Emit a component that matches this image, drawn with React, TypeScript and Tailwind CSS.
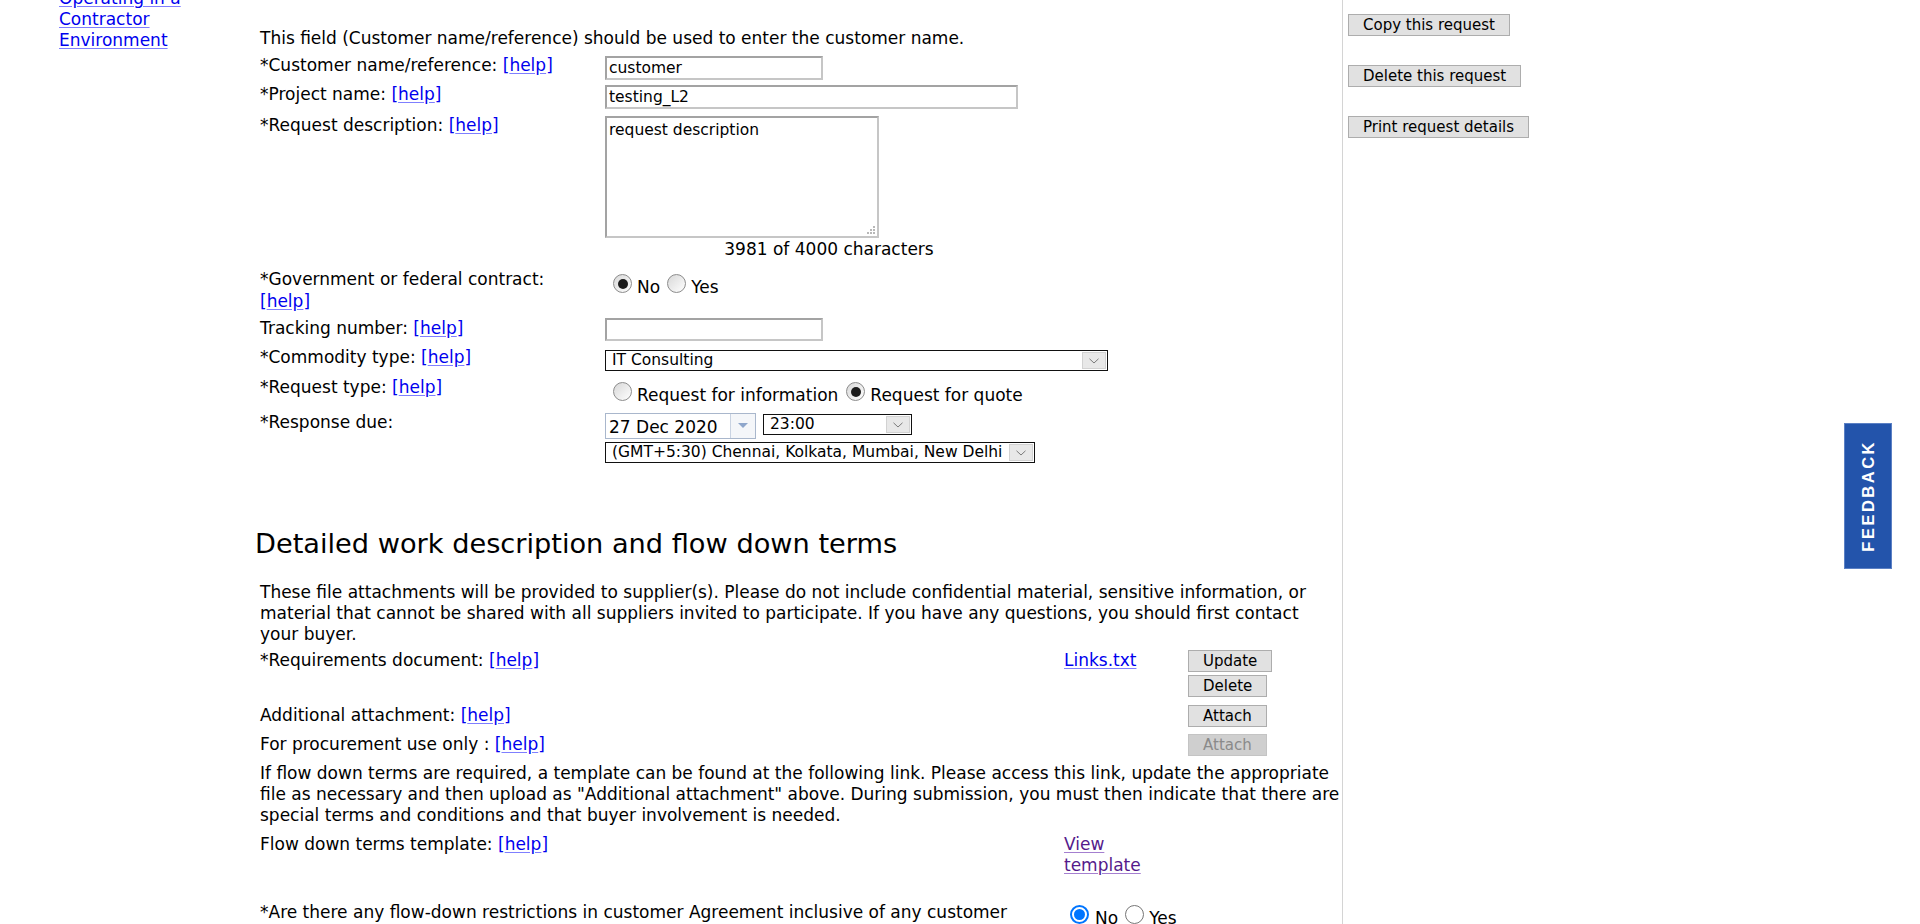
import React from "react";

const Help = () => (
  <span className="text-[#0000ee]">
    [<span className="underline decoration-[#7f7fff] underline-offset-[2px]">help</span>]
  </span>
);

function Radio({ checked, blue }: { checked?: boolean; blue?: boolean }) {
  if (blue) {
    return checked ? (
      <span className="inline-flex h-[19px] w-[19px] shrink-0 items-center justify-center rounded-full border-2 border-[#0075ff] bg-white">
        <span className="h-[11px] w-[11px] rounded-full bg-[#0075ff]" />
      </span>
    ) : (
      <span className="inline-flex h-[19px] w-[19px] shrink-0 rounded-full border border-[#767676] bg-white" />
    );
  }
  return (
    <span className="inline-flex h-[19px] w-[19px] shrink-0 items-center justify-center rounded-full border border-[#8c8c8c] bg-gradient-to-br from-[#d8d8d8] to-white">
      {checked && <span className="h-[10px] w-[10px] rounded-full bg-[#1c1c1c]" />}
    </span>
  );
}

const Chevron = () => (
  <svg width="10" height="6" viewBox="0 0 10 6" fill="none">
    <path d="M0.5 0.8 L5 5 L9.5 0.8" stroke="#7a7a7a" strokeWidth="1" />
  </svg>
);

function Select({ w, text }: { w: string; text: string }) {
  return (
    <div className={`flex h-[21px] items-stretch border border-[#111111] bg-white ${w}`}>
      <div className="flex-1 overflow-hidden whitespace-nowrap pl-[6px] text-[15.5px] leading-[19px]">{text}</div>
      <div className="my-[1px] mr-[1px] flex w-[24px] items-center justify-center border border-[#d2d2d2] bg-[#e8e8e8]">
        <Chevron />
      </div>
    </div>
  );
}

function Btn({ children, disabled }: { children: React.ReactNode; disabled?: boolean }) {
  return disabled ? (
    <div className="h-[22px] border border-[#c4c4c4] bg-[#cfcfcf] px-[14px] text-[15px] leading-[20px] text-[#8a8a8a]">
      {children}
    </div>
  ) : (
    <div className="h-[22px] border border-[#adadad] bg-[#e1e1e1] px-[14px] text-[15px] leading-[20px] text-black">
      {children}
    </div>
  );
}

const TextBox = ({ w, value, h }: { w: string; value?: string; h: string }) => (
  <div
    className={`${w} ${h} border-2 border-t-[#a3a3a3] border-l-[#a3a3a3] border-r-[#c6c6c6] border-b-[#c6c6c6] bg-white pl-[2px] text-[15.5px] leading-[20px]`}
  >
    {value}
  </div>
);

export default function App() {
  return (
    <div className="relative flex h-[924px] w-[1920px] overflow-hidden bg-white font-['DejaVu_Sans',sans-serif] text-[17px] leading-[21px] text-black">
      {/* Left nav */}
      <div className="w-[255px] shrink-0 pl-[59px]">
        <div className="-mt-[12px] w-[150px]">
          <a className="text-[#0000ee] underline decoration-[#7f7fff] underline-offset-[2px]">
            Operating in a Contractor Environment
          </a>
        </div>
      </div>

      {/* Main */}
      <div className="w-[1087px] shrink-0">
        <div className="pl-[5px]">
          <p className="mt-[28px]">This field (Customer name/reference) should be used to enter the customer name.</p>

          <div className="mt-[6px] flex">
            <div className="w-[345px]">
              *Customer name/reference: <Help />
            </div>
            <div className="mt-[1px]">
              <TextBox w="w-[218px]" h="h-[24px]" value="customer" />
            </div>
          </div>

          <div className="mt-[4px] flex">
            <div className="w-[345px]">
              *Project name: <Help />
            </div>
            <div className="mt-[1px]">
              <TextBox w="w-[413px]" h="h-[24px]" value="testing_L2" />
            </div>
          </div>

          <div className="mt-[6px] flex">
            <div className="w-[345px]">
              *Request description: <Help />
            </div>
            <div className="mt-[1px]">
              <div className="relative h-[122px] w-[274px] border-2 border-t-[#a3a3a3] border-l-[#a3a3a3] border-r-[#c6c6c6] border-b-[#c6c6c6] bg-white pl-[2px] pt-[3px] text-[15.5px] leading-[19px]">
                request description
                <svg className="absolute bottom-[2px] right-[2px]" width="10" height="10" viewBox="0 0 10 10">
                  <rect x="8" y="2" width="2" height="2" fill="#b8b8b8" />
                  <rect x="5" y="5" width="2" height="2" fill="#b8b8b8" />
                  <rect x="8" y="5" width="2" height="2" fill="#b8b8b8" />
                  <rect x="2" y="8" width="2" height="2" fill="#b8b8b8" />
                  <rect x="5" y="8" width="2" height="2" fill="#b8b8b8" />
                  <rect x="8" y="8" width="2" height="2" fill="#b8b8b8" />
                </svg>
              </div>
            </div>
          </div>

          <div className="mt-[1px] flex">
            <div className="w-[345px]" />
            <div className="w-[448px] text-center">3981 of 4000 characters</div>
          </div>

          <div className="mt-[9px] flex">
            <div className="w-[345px] leading-[21.5px]">
              *Government or federal contract:
              <br />
              <Help />
            </div>
            <div className="flex items-start pl-[8px]">
              <span className="mt-[5px] flex">
                <Radio checked />
              </span>
              <span className="ml-[5px] mt-[8px]">No</span>
              <span className="ml-[7px] mt-[5px] flex">
                <Radio />
              </span>
              <span className="ml-[5px] mt-[8px]">Yes</span>
            </div>
          </div>

          <div className="mt-[6px] flex">
            <div className="w-[345px]">
              Tracking number: <Help />
            </div>
            <div>
              <TextBox w="w-[218px]" h="h-[23px]" />
            </div>
          </div>

          <div className="mt-[6px] flex">
            <div className="w-[345px]">
              *Commodity type: <Help />
            </div>
            <div className="mt-[3px]">
              <Select w="w-[503px]" text="IT Consulting" />
            </div>
          </div>

          <div className="mt-[6px] flex">
            <div className="w-[345px]">
              *Request type: <Help />
            </div>
            <div className="flex items-start pl-[8px]">
              <span className="mt-[5px] flex">
                <Radio />
              </span>
              <span className="ml-[5px] mt-[8px]">Request for information</span>
              <span className="ml-[8px] mt-[5px] flex">
                <Radio checked />
              </span>
              <span className="ml-[5px] mt-[8px]">Request for quote</span>
            </div>
          </div>

          <div className="mt-[6px] flex">
            <div className="w-[345px]">*Response due:</div>
            <div className="mt-[1px] flex flex-col items-start gap-[3px]">
              <div className="flex items-start gap-[7px]">
                <div className="flex h-[26px] w-[151px] border border-[#a9b7cc] bg-white">
                  <div className="flex-1 pl-[3px] text-[17px] leading-[26px]">27 Dec 2020</div>
                  <div className="flex w-[25px] items-center justify-center border-l border-[#c9d3e2] bg-[#f4f6f9]">
                    <svg width="10" height="6" viewBox="0 0 10 6">
                      <path d="M0 0 H10 L5 5 Z" fill="#8ea6cb" />
                    </svg>
                  </div>
                </div>
                <div className="mt-[1px]">
                  <Select w="w-[149px]" text="23:00" />
                </div>
              </div>
              <Select w="w-[430px]" text="(GMT+5:30) Chennai, Kolkata, Mumbai, New Delhi" />
            </div>
          </div>
        </div>

        <h2 className="mt-[65px] text-[27.2px] font-normal leading-[32px]">Detailed work description and flow down terms</h2>

        <div className="pl-[5px]">
          <p className="mt-[22px] w-[1082px]">
            These file attachments will be provided to supplier(s). Please do not include confidential material, sensitive
            information, or material that cannot be shared with all suppliers invited to participate. If you have any
            questions, you should first contact your buyer.
          </p>

          <div className="mt-[5px] flex">
            <div className="w-[804px]">
              *Requirements document: <Help />
            </div>
            <div className="w-[124px]">
              <a className="text-[#0000ee] underline decoration-[#7f7fff] underline-offset-[2px]">Links.txt</a>
            </div>
            <div className="flex flex-col items-start gap-[3px]">
              <Btn>Update</Btn>
              <Btn>Delete</Btn>
            </div>
          </div>

          <div className="mt-[8px] flex">
            <div className="w-[804px]">
              Additional attachment: <Help />
            </div>
            <div className="w-[124px]" />
            <div>
              <Btn>Attach</Btn>
            </div>
          </div>

          <div className="mt-[7px] flex">
            <div className="w-[804px]">
              For procurement use only : <Help />
            </div>
            <div className="w-[124px]" />
            <div>
              <Btn disabled>Attach</Btn>
            </div>
          </div>

          <p className="mt-[7px] w-[1082px]">
            If flow down terms are required, a template can be found at the following link. Please access this link, update
            the appropriate file as necessary and then upload as "Additional attachment" above. During submission, you must
            then indicate that there are special terms and conditions and that buyer involvement is needed.
          </p>

          <div className="mt-[8px] flex">
            <div className="w-[804px]">
              Flow down terms template: <Help />
            </div>
            <div className="w-[124px] pr-[10px]">
              <a className="text-[#551a8b] underline decoration-[#a47fd0] underline-offset-[2px]">View template</a>
            </div>
          </div>

          <div className="mt-[26px] flex">
            <div className="w-[804px] pr-[30px]">
              *Are there any flow-down restrictions in customer Agreement inclusive of any customer
            </div>
            <div className="flex items-start pl-[6px]">
              <span className="mt-[3px] flex">
                <Radio checked blue />
              </span>
              <span className="ml-[6px] mt-[6px]">No</span>
              <span className="ml-[7px] mt-[3px] flex">
                <Radio blue />
              </span>
              <span className="ml-[5px] mt-[6px]">Yes</span>
            </div>
          </div>
        </div>
      </div>

      {/* Separator */}
      <div className="w-px shrink-0 bg-[#d4d4d4]" />

      {/* Right sidebar */}
      <div className="flex flex-col items-start gap-[29px] pl-[5px] pt-[14px]">
        <Btn>Copy this request</Btn>
        <Btn>Delete this request</Btn>
        <Btn>Print request details</Btn>
      </div>

      {/* Feedback tab */}
      <div className="absolute left-[1844px] top-[423px] flex h-[146px] w-[48px] items-center justify-center border border-[#5b80c4] bg-[#2354ab]">
        <span className="rotate-180 font-['Liberation_Sans',sans-serif] text-[16.5px] font-bold tracking-[2.5px] text-white [writing-mode:vertical-rl]">
          FEEDBACK
        </span>
      </div>
    </div>
  );
}
